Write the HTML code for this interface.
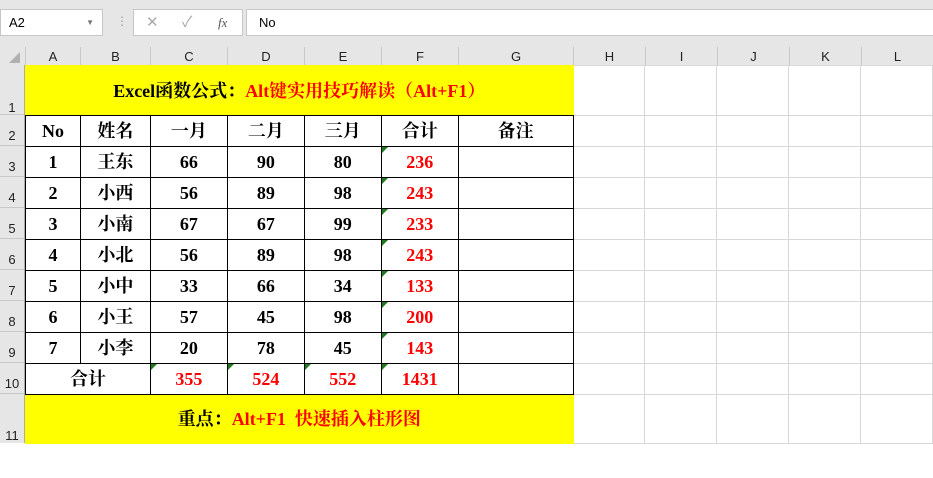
<!DOCTYPE html>
<html><head><meta charset="utf-8"><style>
*{margin:0;padding:0;box-sizing:border-box}
body{width:933px;height:443px;overflow:hidden;background:#fff;font-family:"Liberation Sans","Noto Sans CJK SC",sans-serif;position:relative}
#top{position:absolute;left:0;top:0;width:933px;height:47px;background:#e6e6e6}
.box{position:absolute;background:#fff;border:1px solid #c6c6c6}
#colh{position:absolute;left:0;top:47px;width:933px;height:19px;background:#e6e6e6;border-bottom:1px solid #ababab}
.ch{position:absolute;top:0;height:18px;border-left:1px solid #c8c8c8;font-size:13px;color:#222;text-align:center;line-height:20px}
#rowh{position:absolute;left:0;top:65px;width:25px;height:378px;background:#e6e6e6;border-right:1px solid #ababab}
.rh{position:absolute;left:0;width:24px;border-bottom:1px solid #c8c8c8;font-size:13px;color:#222;text-align:center}
table{position:absolute;left:25px;top:65px;border-collapse:collapse;table-layout:fixed}
td{border:1px solid #d8d8d8;padding:0;text-align:center;font-family:"Liberation Serif","Noto Serif CJK SC",serif;font-weight:bold;font-size:18px;line-height:20px;color:#000;position:relative;overflow:hidden;white-space:nowrap}
td.b{border:1px solid #000}
td.y{background:#ff0;border:1px solid #ff0}
.r{color:#f00}
.t::before{content:"";position:absolute;left:0;top:0;border-top:6px solid #1e7b1e;border-right:6px solid transparent}
</style></head><body>
<div id="top">
 <div class="box" style="left:0;top:9px;width:103px;height:27px;font-size:13px;line-height:25px;padding-left:8px">A2<span style="position:absolute;right:8px;top:0;font-size:8px;color:#777">▼</span></div>
 <div style="position:absolute;left:116px;top:14px;color:#999;font-size:12px">⋮</div>
 <div class="box" style="left:133px;top:9px;width:110px;height:27px;color:#aaa;font-size:15px;line-height:25px"><span style="position:absolute;left:12px">✕</span><span style="position:absolute;left:48px">✓</span><span style="position:absolute;left:84px;color:#555;font-family:'Liberation Serif',serif;font-style:italic;font-size:13px">fx</span></div>
 <div class="box" style="left:246px;top:9px;width:700px;height:27px;font-size:13px;line-height:25px;padding-left:12px">No</div>
</div>
<div id="colh">
 <div style="position:absolute;left:9px;top:5px;border-bottom:11px solid #b0b0b0;border-left:11px solid transparent"></div>
 <div class="ch" style="left:25px;width:55px">A</div>
 <div class="ch" style="left:80px;width:70px">B</div>
 <div class="ch" style="left:150px;width:77px">C</div>
 <div class="ch" style="left:227px;width:77px">D</div>
 <div class="ch" style="left:304px;width:77px">E</div>
 <div class="ch" style="left:381px;width:77px">F</div>
 <div class="ch" style="left:458px;width:115px">G</div>
 <div class="ch" style="left:573px;width:72px">H</div>
 <div class="ch" style="left:645px;width:72px">I</div>
 <div class="ch" style="left:717px;width:72px">J</div>
 <div class="ch" style="left:789px;width:72px">K</div>
 <div class="ch" style="left:861px;width:72px">L</div>
</div>
<div id="rowh">
 <div class="rh" style="top:0;height:50px;line-height:86px">1</div>
 <div class="rh" style="top:50px;height:31px;line-height:42px">2</div>
 <div class="rh" style="top:81px;height:31px;line-height:42px">3</div>
 <div class="rh" style="top:112px;height:31px;line-height:42px">4</div>
 <div class="rh" style="top:143px;height:31px;line-height:42px">5</div>
 <div class="rh" style="top:174px;height:31px;line-height:42px">6</div>
 <div class="rh" style="top:205px;height:31px;line-height:42px">7</div>
 <div class="rh" style="top:236px;height:31px;line-height:42px">8</div>
 <div class="rh" style="top:267px;height:31px;line-height:42px">9</div>
 <div class="rh" style="top:298px;height:31px;line-height:42px">10</div>
 <div class="rh" style="top:329px;height:49px;line-height:84px;border:0">11</div>
</div>
<table>
<colgroup><col style="width:55px"><col style="width:70px"><col style="width:77px"><col style="width:77px"><col style="width:77px"><col style="width:77px"><col style="width:115px"><col style="width:72px"><col style="width:72px"><col style="width:72px"><col style="width:72px"><col style="width:72px"></colgroup>
<tr style="height:50px"><td class="y" colspan="7" style="border-bottom:1px solid #000">Excel函数公式：<span class="r">Alt键实用技巧解读（Alt+F1）</span></td><td></td><td></td><td></td><td></td><td></td></tr>
<tr style="height:31px"><td class="b">No</td><td class="b">姓名</td><td class="b">一月</td><td class="b">二月</td><td class="b">三月</td><td class="b">合计</td><td class="b">备注</td><td></td><td></td><td></td><td></td><td></td></tr>
<tr style="height:31px"><td class="b">1</td><td class="b">王东</td><td class="b">66</td><td class="b">90</td><td class="b">80</td><td class="b r t">236</td><td class="b"></td><td></td><td></td><td></td><td></td><td></td></tr>
<tr style="height:31px"><td class="b">2</td><td class="b">小西</td><td class="b">56</td><td class="b">89</td><td class="b">98</td><td class="b r t">243</td><td class="b"></td><td></td><td></td><td></td><td></td><td></td></tr>
<tr style="height:31px"><td class="b">3</td><td class="b">小南</td><td class="b">67</td><td class="b">67</td><td class="b">99</td><td class="b r t">233</td><td class="b"></td><td></td><td></td><td></td><td></td><td></td></tr>
<tr style="height:31px"><td class="b">4</td><td class="b">小北</td><td class="b">56</td><td class="b">89</td><td class="b">98</td><td class="b r t">243</td><td class="b"></td><td></td><td></td><td></td><td></td><td></td></tr>
<tr style="height:31px"><td class="b">5</td><td class="b">小中</td><td class="b">33</td><td class="b">66</td><td class="b">34</td><td class="b r t">133</td><td class="b"></td><td></td><td></td><td></td><td></td><td></td></tr>
<tr style="height:31px"><td class="b">6</td><td class="b">小王</td><td class="b">57</td><td class="b">45</td><td class="b">98</td><td class="b r t">200</td><td class="b"></td><td></td><td></td><td></td><td></td><td></td></tr>
<tr style="height:31px"><td class="b">7</td><td class="b">小李</td><td class="b">20</td><td class="b">78</td><td class="b">45</td><td class="b r t">143</td><td class="b"></td><td></td><td></td><td></td><td></td><td></td></tr>
<tr style="height:31px"><td class="b" colspan="2">合计</td><td class="b r t">355</td><td class="b r t">524</td><td class="b r t">552</td><td class="b r t">1431</td><td class="b"></td><td></td><td></td><td></td><td></td><td></td></tr>
<tr style="height:49px"><td class="y" colspan="7" style="border-top:1px solid #000">重点：<span class="r">Alt+F1&nbsp; 快速插入柱形图</span></td><td></td><td></td><td></td><td></td><td></td></tr>
</table>
</body></html>
